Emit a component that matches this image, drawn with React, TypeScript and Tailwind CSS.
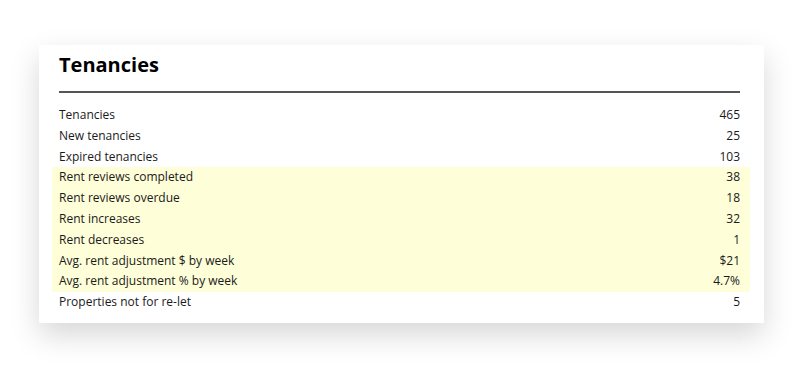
const rows = [
  { label: "Tenancies", value: "465" },
  { label: "New tenancies", value: "25" },
  { label: "Expired tenancies", value: "103" },
  { label: "Rent reviews completed", value: "38", hl: true },
  { label: "Rent reviews overdue", value: "18", hl: true },
  { label: "Rent increases", value: "32", hl: true },
  { label: "Rent decreases", value: "1", hl: true },
  { label: "Avg. rent adjustment $ by week", value: "$21", hl: true },
  { label: "Avg. rent adjustment % by week", value: "4.7%", hl: true },
  { label: "Properties not for re-let", value: "5" },
]

export default function App() {
  return (
    <div className="w-[800px] h-[382px] bg-white pt-[45px] pl-[39px] font-['Open_Sans',sans-serif] text-[#1a1a1a]">
      <div className="w-[725px] h-[278px] bg-white shadow-[0_12px_28px_rgba(0,0,0,0.16)] pl-5 pr-6 pt-[6px]">
        <h2 className="text-[20px] leading-[28px] font-bold text-black">Tenancies</h2>
        <div className="mt-3 h-[2px] bg-[#555555]" />
        <div className="mt-[12px]">
          {rows.map((row) => (
            <div
              key={row.label}
              className={
                row.hl
                  ? "flex justify-between h-[20.8px] text-[12px] leading-[20.8px] bg-[#fefed9] -ml-[7px] -mr-[10px] pl-[7px] pr-[10px]"
                  : "flex justify-between h-[20.8px] text-[12px] leading-[20.8px]"
              }
            >
              <span>{row.label}</span>
              <span>{row.value}</span>
            </div>
          ))}
        </div>
      </div>
    </div>
  )
}
